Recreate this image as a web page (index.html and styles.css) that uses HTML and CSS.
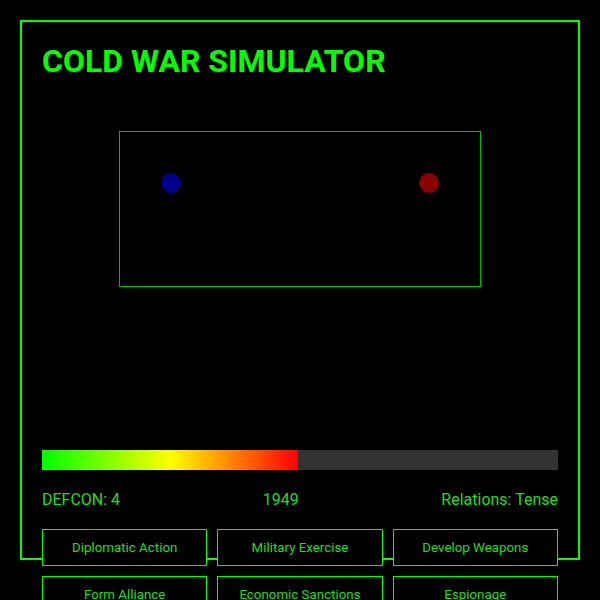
FILE: index.html
```html
<!DOCTYPE html>
<html lang="en">
<head>
  <meta charset="UTF-8">
  <title>Cold War Simulator</title>
  <link rel="stylesheet" href="styles.css">
</head>
<body>

  <div class="juego">
    <h1 class="titulo">COLD WAR SIMULATOR</h1>

    <div class="mapa">
      <svg class="tablero" width="360" height="154" viewBox="0 0 360 154">
        <!-- USA / USSR -->
        <circle cx="51" cy="51" r="10" fill="#00008b"></circle>
        <circle cx="309" cy="51" r="10" fill="#8b0000"></circle>
      </svg>
    </div>

    <div class="tension">
      <div class="tension-fill" style="width: 49.6%"></div>
    </div>

    <div class="estado">
      <span>DEFCON: 4</span>
      <span>1949</span>
      <span>Relations: Tense</span>
    </div>

    <div class="acciones">
      <button>Diplomatic Action</button>
      <button>Military Exercise</button>
      <button>Develop Weapons</button>
      <button>Form Alliance</button>
      <button>Economic Sanctions</button>
      <button>Espionage</button>
    </div>
  </div>

</body>
</html>
```

FILE: styles.css
```css
html {
  background-color: #000;
}

body {
  font-family: Roboto, "Liberation Sans", sans-serif;
  color: #22dd22;
  margin: 0;
  padding: 20px 20px 60px;
}

.juego {
  box-sizing: border-box;
  height: 540px;
  border: 2px solid #0f0;
  padding: 20px;
}

.titulo {
  margin: 0;
  font-size: 32px;
  line-height: 38px;
  font-weight: bold;
  color: #0f0;
}

.mapa {
  display: flex;
  justify-content: center;
  padding-top: 51px;
  height: 319px;
}

.tablero {
  display: block;
  background-color: #000;
  border: 1px solid #0b0;
}

.tension {
  height: 20px;
  background-color: #333;
}

.tension-fill {
  height: 100%;
  background: linear-gradient(to right, #0f0, #ff0, #f00);
}

.estado {
  display: flex;
  justify-content: space-between;
  margin: 20px 0;
  font-size: 16px;
  line-height: 19px;
}

.acciones {
  display: grid;
  grid-template-columns: repeat(3, 1fr);
  gap: 10px;
}

.acciones button {
  font-family: inherit;
  font-size: 13.33px;
  line-height: 15px;
  padding: 10px 0;
  background-color: #000;
  color: #22dd22;
  border: 1px solid #0f0;
  cursor: pointer;
}

.acciones button:hover {
  background-color: #031;
}
```
